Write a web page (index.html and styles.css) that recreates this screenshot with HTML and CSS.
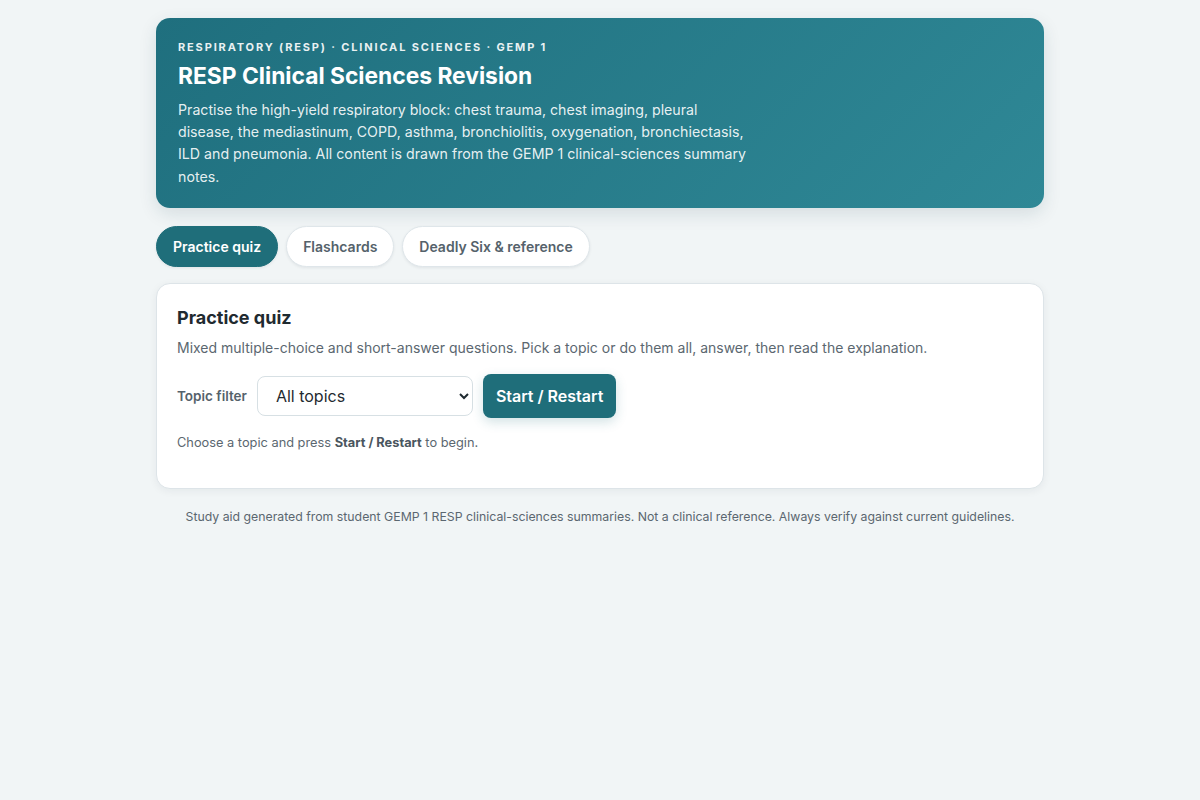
FILE: index.html
```html
<!DOCTYPE html>
<html lang="en">
<head>
    <meta charset="UTF-8">
    <meta name="viewport" content="width=device-width, initial-scale=1.0">
    <title>RESP Clinical Sciences Revision</title>
    <link rel="stylesheet" href="styles.css">
</head>
<body>
    <div class="wrap">
        <header class="hero">
            <div class="eyebrow">Respiratory (RESP) · Clinical Sciences · GEMP 1</div>
            <h1>RESP Clinical Sciences Revision</h1>
            <p>Practise the high-yield respiratory block: chest trauma, chest imaging, pleural disease, the mediastinum, COPD, asthma, bronchiolitis, oxygenation, bronchiectasis, ILD and pneumonia. All content is drawn from the GEMP 1 clinical-sciences summary notes.</p>
        </header>

        <nav class="tabs">
            <button class="tab active">Practice quiz</button>
            <button class="tab">Flashcards</button>
            <button class="tab">Deadly Six &amp; reference</button>
        </nav>

        <section class="card">
            <h2>Practice quiz</h2>
            <p class="muted">Mixed multiple-choice and short-answer questions. Pick a topic or do them all, answer, then read the explanation.</p>
            <div class="controls">
                <label for="topic">Topic filter</label>
                <select id="topic">
                    <option>All topics</option>
                    <option>Chest trauma</option>
                    <option>Chest imaging</option>
                    <option>Pleural disease</option>
                    <option>Mediastinum</option>
                    <option>COPD</option>
                    <option>Asthma</option>
                </select>
                <button class="primary">Start / Restart</button>
            </div>
            <p class="status">Choose a topic and press <strong>Start / Restart</strong> to begin.</p>
        </section>

        <footer class="foot">Study aid generated from student GEMP 1 RESP clinical-sciences summaries. Not a clinical reference. Always verify against current guidelines.</footer>
    </div>
</body>
</html>
```

FILE: styles.css
```css
* {
    box-sizing: border-box;
}
body {
    margin: 0;
    background: #f1f5f6;
    font-family: Inter, "Noto Sans", sans-serif;
    color: #1f2a30;
}
.wrap {
    max-width: 888px;
    margin: 0 auto;
    padding: 18px 0 40px;
}
.hero {
    background: linear-gradient(135deg, #1f6f7e 0%, #2f8896 100%);
    color: #fff;
    border-radius: 14px;
    padding: 22px 22px 20px;
    box-shadow: 0 6px 18px rgba(20, 60, 70, 0.12);
}
.eyebrow {
    font-size: 11px;
    font-weight: 700;
    letter-spacing: 1.85px;
    text-transform: uppercase;
    opacity: 0.9;
}
.hero h1 {
    margin: 7px 0 8px;
    font-size: 22.8px;
    font-weight: 700;
    line-height: 1.3;
}
.hero p {
    margin: 0;
    max-width: 574px;
    font-size: 14.2px;
    line-height: 22.3px;
    color: rgba(255, 255, 255, 0.9);
}
.tabs {
    display: flex;
    gap: 8px;
    margin: 18px 0 16px;
}
.tab {
    font-family: inherit;
    font-size: 14px;
    font-weight: 600;
    color: #55626b;
    background: #fff;
    border: 1px solid #dfe6ea;
    border-radius: 999px;
    padding: 11px 16px;
    cursor: pointer;
    box-shadow: 0 1px 3px rgba(20, 40, 50, 0.08);
}
.tab.active {
    background: #1f6e7a;
    border-color: #1f6e7a;
    color: #fff;
}
.card {
    background: #fff;
    border: 1px solid #dde4e8;
    border-radius: 14px;
    padding: 22px 20px 38px;
    box-shadow: 0 2px 8px rgba(20, 40, 50, 0.06);
}
.card h2 {
    margin: 0 0 8px;
    font-size: 18px;
    font-weight: 700;
    line-height: 24px;
}
.muted {
    margin: 0;
    font-size: 14px;
    line-height: 20px;
    color: #5b6770;
}
.controls {
    display: flex;
    align-items: center;
    gap: 10px;
    margin-top: 16px;
}
.controls label {
    font-size: 13.5px;
    font-weight: 600;
    color: #55626b;
}
.controls select {
    width: 216px;
    height: 40px;
    font-family: inherit;
    font-size: 16px;
    color: #1f2a30;
    background: #fff;
    border: 1px solid #d7e0e4;
    border-radius: 8px;
    padding: 0 14px;
}
.primary {
    font-family: inherit;
    font-size: 16px;
    font-weight: 600;
    color: #fff;
    background: #1f6e7a;
    border: none;
    border-radius: 8px;
    height: 44px;
    padding: 0 13px;
    cursor: pointer;
    box-shadow: 0 4px 12px rgba(31, 110, 122, 0.2);
}
.status {
    margin: 17px 0 0;
    font-size: 12.8px;
    color: #5b6770;
}
.status strong {
    color: #4a565e;
}
.foot {
    margin-top: 20px;
    text-align: center;
    font-size: 12.3px;
    color: #5b6770;
}
```
